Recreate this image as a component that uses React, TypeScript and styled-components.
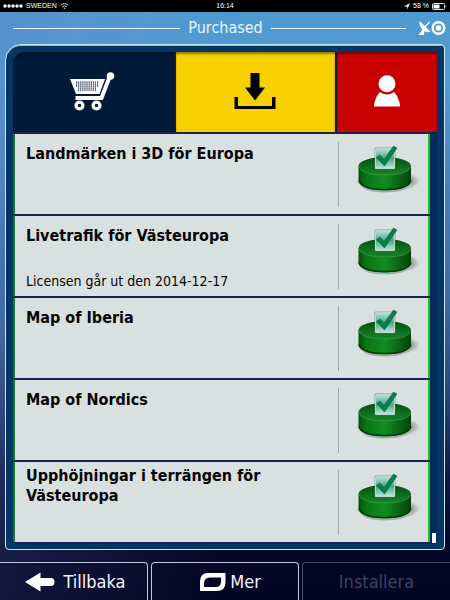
import React from "react";
import styled, { createGlobalStyle } from "styled-components";

const GlobalStyle = createGlobalStyle`
  * { box-sizing: border-box; }
  html, body, #root { height: 100%; margin: 0; }
  body { font-family: "DejaVu Sans Condensed", "Noto Sans", sans-serif; background: #020824; }
  button { font: inherit; color: inherit; border: 0; padding: 0; cursor: pointer; }
  h1, h2, p, ul { margin: 0; padding: 0; }
`;

const Screen = styled.div`
  min-height: 100%;
  display: flex;
  flex-direction: column;
  color: #fff;
  background:
    linear-gradient(115deg, transparent 0 8%, rgba(150, 170, 230, 0.09) 11% 13%, transparent 15% 19%, rgba(150, 170, 230, 0.07) 21%, transparent 24% 100%),
    linear-gradient(90deg, rgba(100, 110, 190, 0.22), transparent 50%),
    linear-gradient(#4d9ad0 0, #539dd3 14%, #467fbb 33%, #3b6ca6 50%, #27447c 66%, #0c1743 80%, #030828 92%, #020620 100%);
`;

const StatusBar = styled.div`
  height: 12px;
  flex: none;
  display: grid;
  grid-template-columns: 1fr auto 1fr;
  align-items: center;
  padding: 0 3px;
  background: #000;
  font: 7px/12px "Liberation Sans", sans-serif;
`;

const StatusGroup = styled.div<{ $end?: boolean }>`
  display: flex;
  align-items: center;
  justify-content: ${(p) => (p.$end ? "flex-end" : "flex-start")};
  gap: 3px;
`;

const Header = styled.header`
  height: 32px;
  flex: none;
  display: grid;
  grid-template-columns: 167fr auto 135fr 32px;
  align-items: center;
  gap: 8px;
  padding: 0 4px 0 13px;

  & > svg { justify-self: end; }
`;

const Title = styled.h1`
  font-size: 16px;
  line-height: 20px;
  font-weight: 400;
  color: #eaf5fc;
`;

const Rule = styled.span`
  height: 1px;
  background: #eaf5fc;
`;

const Panel = styled.main`
  flex: 1;
  display: flex;
  flex-direction: column;
  margin: 0 5px;
  padding: 7px 7px 5px;
  border: 1px solid #d3e6f2;
  border-radius: 16px 4px 4px 4px;
  background: #033664;
  box-shadow: inset 0 1px 0 #8fb6d3;
`;

const Tabs = styled.nav`
  display: grid;
  grid-template-columns: 161fr 160fr 100fr;
  gap: 2px;
  height: 80px;
  flex: none;
  background: #11183c;
  border-radius: 12px 0 0 0;
`;

const Tab = styled.button<{ $bg: string; $fg: string }>`
  display: flex;
  align-items: center;
  justify-content: center;
  background: ${(p) => p.$bg};
  color: ${(p) => p.$fg};
  box-shadow: inset 0 2px 2px rgba(0, 0, 0, 0.4);

  &:first-child { border-radius: 12px 0 0 0; }
`;

const ListArea = styled.div`
  flex: 1;
  display: flex;
  align-items: flex-end;
  background: #022b59;
`;

const List = styled.ul`
  flex: 1;
  align-self: stretch;
  display: grid;
  grid-auto-rows: 1fr;
  gap: 2px;
  padding: 2px 0 2px;
  list-style: none;
  background: #17234f;
`;

const Row = styled.li`
  display: grid;
  grid-template-columns: 1fr 90px;
  border-left: 2px solid #127a24;
  border-right: 2px solid #12c41c;
  background: #d9e1e0;
  color: #050505;
`;

const RowText = styled.div<{ $tall?: boolean }>`
  display: flex;
  flex-direction: column;
  justify-content: space-between;
  padding: ${(p) => (p.$tall ? 4 : 10)}px 40px 6px 11px;
`;

const Name = styled.h2`
  font-size: 16px;
  line-height: 20px;
  font-weight: 700;
`;

const Note = styled.p`
  font-size: 14px;
  line-height: 18px;
`;

const State = styled.div`
  display: flex;
  justify-content: center;
  align-items: flex-start;
  margin: 8px 0 7px;
  padding: 1px 0 0 5px;
  border-left: 1px solid #a5abab;
`;

const Thumb = styled.span`
  width: 4px;
  height: 10px;
  margin: 0 1px 1px 2px;
  background: #fff;
`;

const Footer = styled.footer`
  height: 50px;
  flex: none;
  display: grid;
  grid-template-columns: repeat(3, 1fr);
  gap: 3px;
  padding-top: 12px;
`;

const FooterButton = styled.button`
  display: flex;
  align-items: center;
  justify-content: center;
  gap: 8px;
  border: 1px solid #c3c8dc;
  border-bottom: 0;
  border-radius: 4px 4px 0 0;
  background: rgba(5, 7, 40, 0.3);
  font-size: 18px;
  line-height: 24px;
  color: #f2f4fb;

  &:first-child { border-left: 0; border-top-left-radius: 0; padding-left: 4px; }
  &:last-child { border-right: 0; border-top-right-radius: 0; }
  &:nth-child(2) { gap: 3px; padding-left: 10px; }
  &:disabled { color: #3c4262; border-color: #474c6c; cursor: default; }
`;

const WifiIcon = () => (
  <svg width="9" height="8" viewBox="0 0 9 8" fill="none" stroke="#ddd" strokeWidth="1">
    <path d="M.8 3.2Q4.5 0 8.2 3.2M2.3 4.8q2.2-1.8 4.4 0" />
    <path d="M3.3 5.8h2.4L4.5 7.2z" fill="#ddd" stroke="none" />
  </svg>
);

const SignalIcon = () => (
  <svg width="20" height="6" viewBox="0 0 20 6" fill="#fff">
    {[2, 6, 10, 14, 18].map((x) => <circle key={x} cx={x} cy="3" r="1.7" />)}
  </svg>
);

const LocationIcon = () => (
  <svg width="6" height="7" viewBox="0 0 6 7" fill="#fff"><path d="M6 0 3.2 6.5V3.5H0z" /></svg>
);

const BatteryIcon = () => (
  <svg width="15" height="7" viewBox="0 0 15 7">
    <rect x=".5" y=".5" width="12" height="6" rx="1" fill="none" stroke="#ddd" />
    <path d="M1.5 1.5h6v4h-6z" fill="#fff" />
    <path d="M13.5 2.2q1.5 1.3 0 2.6z" fill="#ddd" />
  </svg>
);

const SatelliteIcon = () => (
  <svg width="29" height="16" viewBox="0 0 29 16" fill="#fff">
    <path d="M2.5 1Q2 6.500 5.500 9.500L1.500 15H7l.3-4q3.500 2 6.200.8L8.800 7 13 2.200l-.8-.8L7.800 6z" />
    <circle cx="21.500" cy="8" r="5.800" fill="none" stroke="#fff" strokeWidth="2.400" />
    <circle cx="21.500" cy="8" r="2.800" />
  </svg>
);

const CartIcon = () => (
  <svg width="46" height="40" viewBox="0 0 46 40">
    <path d="M0 7h35l-5.500 15H6z" fill="#fff" />
    <path d="M39 6.500 31.500 26H5.500" fill="none" stroke="#fff" strokeWidth="4" />
    <circle cx="40.500" cy="4" r="3.800" fill="#fff" />
    <g fill="#001a38">
      {[0, 1, 2, 3, 4].map((r) =>
        Array.from({ length: r > 2 ? 9 : 11 }, (_, c) => (
          <rect key={`${r}-${c}`} x={(r > 2 ? 8 : 6) + c * 2.1} y={9.5 + r * 2} width="1.200" height="1.200" />
        )),
      )}
    </g>
    <g fill="#001a38" stroke="#fff" strokeWidth="3.400">
      <circle cx="9.500" cy="33.500" r="3.400" />
      <circle cx="26.500" cy="33.500" r="3.400" />
    </g>
  </svg>
);

const DownloadIcon = () => (
  <svg width="42" height="38" viewBox="0 0 42 38" fill="#000">
    <path d="M16.500 0h9v14.500h5.500L21 27.500 11 14.500h5.500z" />
    <path d="M.500 24h3.500v9h34v-9h3.500v12H.500z" />
  </svg>
);

const UserIcon = () => (
  <svg width="28" height="34" viewBox="0 0 28 34" fill="#fff">
    <circle cx="14" cy="8.800" r="8.500" />
    <path d="M.800 31.500Q2 22 7 17q7 5 14 0Q26 22 27.200 31.500z" />
  </svg>
);

const InstalledIcon = () => (
  <svg width="72" height="52" viewBox="0 0 72 52" role="img" aria-label="Installerad">
    <defs>
      <linearGradient id="side" x1="0" x2="1">
        <stop offset="0" stopColor="#064f0b" />
        <stop offset=".15" stopColor="#0a7615" />
        <stop offset=".5" stopColor="#128c22" />
        <stop offset="1" stopColor="#04430a" />
      </linearGradient>
      <linearGradient id="lid" x1="0" y1="0" x2="0" y2="1">
        <stop offset="0" stopColor="#06500e" />
        <stop offset="1" stopColor="#15852a" />
      </linearGradient>
      <linearGradient id="box" x1="0" y1="0" x2="0" y2="1">
        <stop offset="0" stopColor="#b8e5da" />
        <stop offset=".5" stopColor="#4fa58f" />
        <stop offset="1" stopColor="#b9ead2" />
      </linearGradient>
      <radialGradient id="shade">
        <stop offset=".6" stopColor="#43534a" stopOpacity=".7" />
        <stop offset="1" stopColor="#43534a" stopOpacity="0" />
      </radialGradient>
    </defs>
    <ellipse cx="38" cy="38" rx="32" ry="11" fill="url(#shade)" />
    <path d="M9 38q2 11.500 26 11.500T61 38z" fill="#a3aca9" />
    <path d="M8.500 23v14.500C8.500 43 20 47.500 34.500 47.500S61 43 61 37.500V23z" fill="url(#side)" />
    <path d="M9 37.500Q12 46.500 35 46.500t26-9" fill="none" stroke="#033d08" strokeWidth="1.500" />
    <ellipse cx="34.750" cy="23" rx="26.200" ry="9" fill="url(#lid)" />
    <path d="M9 24q3 8 26 8t26-8" fill="none" stroke="#3ba146" strokeWidth=".7" />
    <rect x="25.500" y="5.500" width="19" height="20" fill="url(#box)" stroke="#f0faf6" />
    <path d="M25 5h20v21H25z" fill="none" stroke="#477d71" strokeWidth=".6" />
    <path d="m26.500 14.500 3.500-2.500 4 4.500L43.500 3l3.500 2L34.500 23z" fill="#068049" stroke="#046039" strokeWidth=".5" />
  </svg>
);

const BackIcon = () => (
  <svg width="30" height="20" viewBox="0 0 30 20" fill="#fff">
    <path d="M0 10 15.500.500V6H26q3.500 0 3.500 4T26 14H15.500v5.500z" />
  </svg>
);

const MoreIcon = () => (
  <svg width="28" height="20" viewBox="0 0 28 20" fill="#fff" fillRule="evenodd">
    <path d="M9 1h17.500v9q0 9-9 9H1v-9Q1 1 9 1zM11 5.500q-6 0-6 6v3.500h11.500q5.500 0 5.500-5.500v-4z" />
  </svg>
);

const products: { name: string; note?: string; tall?: boolean }[] = [
  { name: "Landmärken i 3D för Europa" },
  { name: "Livetrafik för Västeuropa", note: "Licensen går ut den 2014-12-17" },
  { name: "Map of Iberia" },
  { name: "Map of Nordics" },
  { name: "Upphöjningar i terrängen för Västeuropa", tall: true },
];

export default function App() {
  return (
    <>
      <GlobalStyle />
      <Screen>
        <StatusBar>
          <StatusGroup><SignalIcon /><span>SWEDEN</span><WifiIcon /></StatusGroup>
          <span>16:14</span>
          <StatusGroup $end><LocationIcon /><span>58 %</span><BatteryIcon /></StatusGroup>
        </StatusBar>
        <Header>
          <Rule />
          <Title>Purchased</Title>
          <Rule />
          <SatelliteIcon />
        </Header>
        <Panel>
          <Tabs>
            <Tab $bg="#001a38" $fg="#fff" aria-label="Butik"><CartIcon /></Tab>
            <Tab $bg="#f8d000" $fg="#000" aria-label="Hämtningar"><DownloadIcon /></Tab>
            <Tab $bg="#c90000" $fg="#fff" aria-label="Konto"><UserIcon /></Tab>
          </Tabs>
          <ListArea>
            <List>
              {products.map((p) => (
                <Row key={p.name}>
                  <RowText $tall={p.tall}>
                    <Name>{p.name}</Name>
                    {p.note && <Note>{p.note}</Note>}
                  </RowText>
                  <State><InstalledIcon /></State>
                </Row>
              ))}
            </List>
            <Thumb />
          </ListArea>
        </Panel>
        <Footer>
          <FooterButton><BackIcon />Tillbaka</FooterButton>
          <FooterButton><MoreIcon />Mer</FooterButton>
          <FooterButton disabled>Installera</FooterButton>
        </Footer>
      </Screen>
    </>
  );
}
